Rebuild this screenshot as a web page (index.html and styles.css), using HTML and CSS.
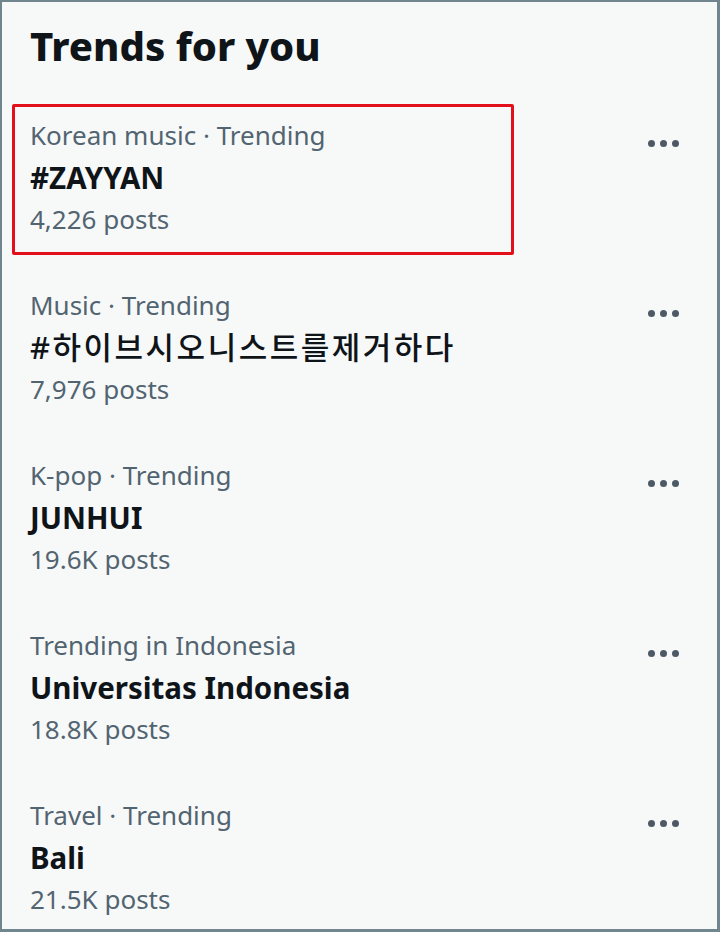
FILE: index.html
```html
<!DOCTYPE html>
<html lang="en">
<head>
    <meta charset="UTF-8">
    <meta name="viewport" content="width=device-width, initial-scale=1.0">
    <title>Trends for you</title>
    <link rel="stylesheet" href="styles.css">
</head>
<body>
    <div class="panel">
        <h2 class="title">Trends for you</h2>

        <div class="trend">
            <div class="highlight"></div>
            <div class="trend-info">
                <div class="meta">Korean music · Trending</div>
                <div class="name">#ZAYYAN</div>
                <div class="meta">4,226 posts</div>
            </div>
            <div class="more"><span></span><span></span><span></span></div>
        </div>

        <div class="trend">
            <div class="trend-info">
                <div class="meta">Music · Trending</div>
                <div class="name name-ko" lang="ko">#하이브시오니스트를제거하다</div>
                <div class="meta">7,976 posts</div>
            </div>
            <div class="more"><span></span><span></span><span></span></div>
        </div>

        <div class="trend">
            <div class="trend-info">
                <div class="meta">K-pop · Trending</div>
                <div class="name">JUNHUI</div>
                <div class="meta">19.6K posts</div>
            </div>
            <div class="more"><span></span><span></span><span></span></div>
        </div>

        <div class="trend">
            <div class="trend-info">
                <div class="meta">Trending in Indonesia</div>
                <div class="name">Universitas Indonesia</div>
                <div class="meta">18.8K posts</div>
            </div>
            <div class="more"><span></span><span></span><span></span></div>
        </div>

        <div class="trend">
            <div class="trend-info">
                <div class="meta">Travel · Trending</div>
                <div class="name">Bali</div>
                <div class="meta">21.5K posts</div>
            </div>
            <div class="more"><span></span><span></span><span></span></div>
        </div>
    </div>
</body>
</html>
```

FILE: styles.css
```css
body {
    margin: 0;
    background-color: #f7f9f9;
    font-family: "Noto Sans", "Noto Sans CJK KR", sans-serif;
    color: #0f1419;
}

.panel {
    width: 720px;
    height: 932px;
    box-sizing: border-box;
    border: 2px solid #71858f;
    border-right-width: 3px;
    border-bottom-width: 3px;
    background-color: #f7f9f9;
    overflow: hidden;
}

.title {
    margin: 0;
    padding: 16px 28px 0;
    height: 102px;
    box-sizing: border-box;
    font-size: 40px;
    font-weight: 800;
    line-height: 56px;
}

.trend {
    position: relative;
    display: flex;
    justify-content: space-between;
    align-items: flex-start;
    height: 170px;
    box-sizing: border-box;
    padding: 10px 38px 0 28px;
}

.highlight {
    position: absolute;
    top: 0;
    left: 10px;
    width: 502px;
    height: 151px;
    box-sizing: border-box;
    border: 3px solid #e3101c;
    border-radius: 2px;
}

.meta {
    font-size: 26px;
    line-height: 43px;
    color: #536471;
}

.name {
    font-size: 29.5px;
    font-weight: 700;
    line-height: 41px;
}

.name-ko {
    font-weight: 500;
    font-size: 31px;
    letter-spacing: 2.5px;
}

.more {
    display: flex;
    gap: 5px;
    margin-top: 26px;
}

.more span {
    width: 7px;
    height: 7px;
    border-radius: 50%;
    background-color: #4d5a66;
}
```
